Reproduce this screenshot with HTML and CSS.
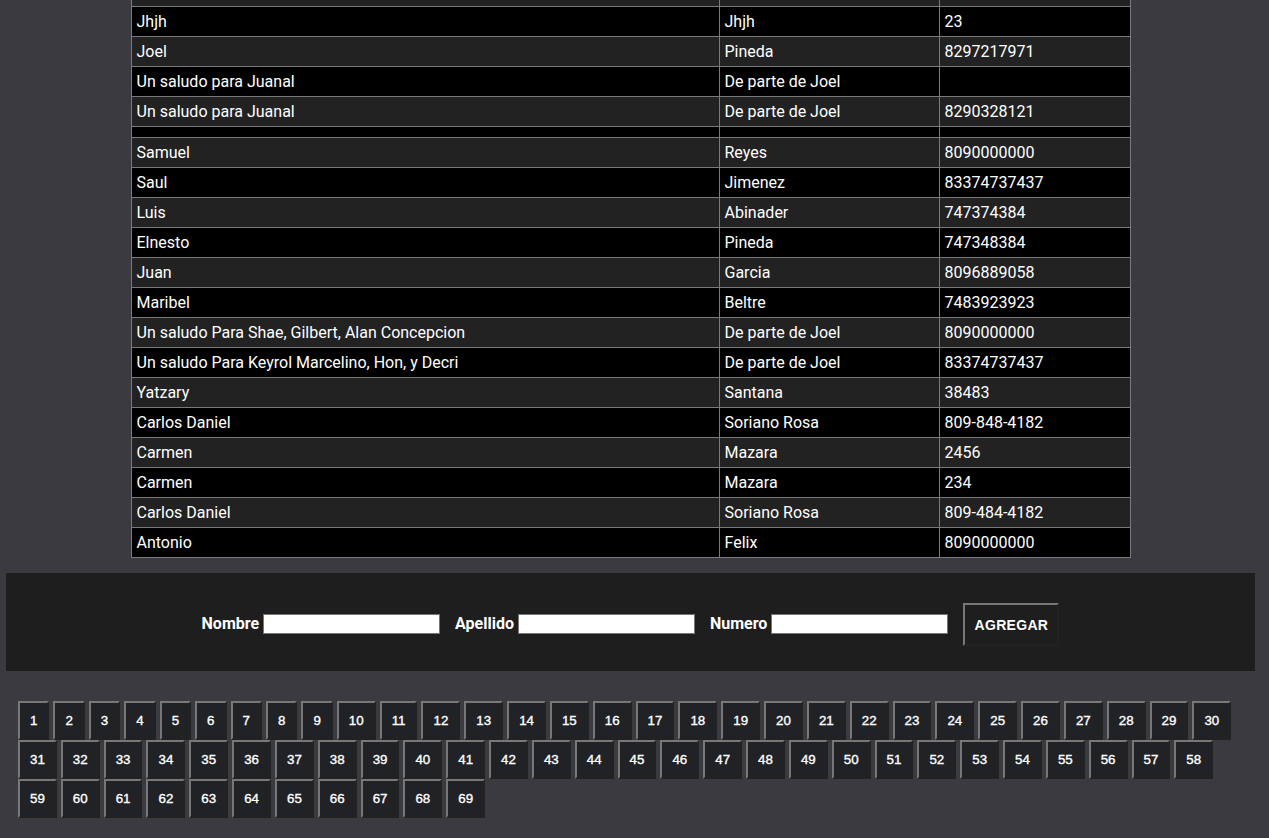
FILE: index.html
```html
<!DOCTYPE html>
<html lang="es">
<head>
<meta charset="utf-8">
<title>Contactos</title>
<link rel="stylesheet" href="styles.css">
</head>
<body>
<div class="page">
  <table class="contacts">
    <tbody>
      <tr class="odd"><td>&nbsp;</td><td>&nbsp;</td><td>&nbsp;</td></tr>
      <tr class="even"><td>Jhjh</td><td>Jhjh</td><td>23</td></tr>
      <tr class="odd"><td>Joel</td><td>Pineda</td><td>8297217971</td></tr>
      <tr class="even"><td>Un saludo para Juanal</td><td>De parte de Joel</td><td></td></tr>
      <tr class="odd"><td>Un saludo para Juanal</td><td>De parte de Joel</td><td>8290328121</td></tr>
      <tr class="even"><td></td><td></td><td></td></tr>
      <tr class="odd"><td>Samuel</td><td>Reyes</td><td>8090000000</td></tr>
      <tr class="even"><td>Saul</td><td>Jimenez</td><td>83374737437</td></tr>
      <tr class="odd"><td>Luis</td><td>Abinader</td><td>747374384</td></tr>
      <tr class="even"><td>Elnesto</td><td>Pineda</td><td>747348384</td></tr>
      <tr class="odd"><td>Juan</td><td>Garcia</td><td>8096889058</td></tr>
      <tr class="even"><td>Maribel</td><td>Beltre</td><td>7483923923</td></tr>
      <tr class="odd"><td>Un saludo Para Shae, Gilbert, Alan Concepcion</td><td>De parte de Joel</td><td>8090000000</td></tr>
      <tr class="even"><td>Un saludo Para Keyrol Marcelino, Hon, y Decri</td><td>De parte de Joel</td><td>83374737437</td></tr>
      <tr class="odd"><td>Yatzary</td><td>Santana</td><td>38483</td></tr>
      <tr class="even"><td>Carlos Daniel</td><td>Soriano Rosa</td><td>809-848-4182</td></tr>
      <tr class="odd"><td>Carmen</td><td>Mazara</td><td>2456</td></tr>
      <tr class="even"><td>Carmen</td><td>Mazara</td><td>234</td></tr>
      <tr class="odd"><td>Carlos Daniel</td><td>Soriano Rosa</td><td>809-484-4182</td></tr>
      <tr class="even"><td>Antonio</td><td>Felix</td><td>8090000000</td></tr>
    </tbody>
  </table>

  <form class="add-form">
    <label class="field-label" for="nombre">Nombre</label>
    <input class="field-input" id="nombre" type="text">
    <label class="field-label" for="apellido">Apellido</label>
    <input class="field-input" id="apellido" type="text">
    <label class="field-label" for="numero">Numero</label>
    <input class="field-input" id="numero" type="text">
    <button class="add-btn" type="button">AGREGAR</button>
  </form>

  <div class="pager">
    <button class="pg">1</button><button class="pg">2</button><button class="pg">3</button><button class="pg">4</button><button class="pg">5</button><button class="pg">6</button><button class="pg">7</button><button class="pg">8</button><button class="pg">9</button><button class="pg">10</button><button class="pg">11</button><button class="pg">12</button><button class="pg">13</button><button class="pg">14</button><button class="pg">15</button><button class="pg">16</button><button class="pg">17</button><button class="pg">18</button><button class="pg">19</button><button class="pg">20</button><button class="pg">21</button><button class="pg">22</button><button class="pg">23</button><button class="pg">24</button><button class="pg">25</button><button class="pg">26</button><button class="pg">27</button><button class="pg">28</button><button class="pg">29</button><button class="pg">30</button><button class="pg">31</button><button class="pg">32</button><button class="pg">33</button><button class="pg">34</button><button class="pg">35</button><button class="pg">36</button><button class="pg">37</button><button class="pg">38</button><button class="pg">39</button><button class="pg">40</button><button class="pg">41</button><button class="pg">42</button><button class="pg">43</button><button class="pg">44</button><button class="pg">45</button><button class="pg">46</button><button class="pg">47</button><button class="pg">48</button><button class="pg">49</button><button class="pg">50</button><button class="pg">51</button><button class="pg">52</button><button class="pg">53</button><button class="pg">54</button><button class="pg">55</button><button class="pg">56</button><button class="pg">57</button><button class="pg">58</button><button class="pg">59</button><button class="pg">60</button><button class="pg">61</button><button class="pg">62</button><button class="pg">63</button><button class="pg">64</button><button class="pg">65</button><button class="pg">66</button><button class="pg">67</button><button class="pg">68</button><button class="pg">69</button>
  </div>
</div>
</body>
</html>
```

FILE: styles.css
```css
html, body {
  margin: 0;
  padding: 0;
  background: #3c3a41;
  overflow: hidden;
}

.page {
  padding: 0 14px 0 6px;
  font-family: Roboto, "Liberation Sans", sans-serif;
  color: #fff;
}

.contacts {
  width: 1000px;
  margin: -24px auto 0;
  border-collapse: collapse;
  font-size: 16px;
  line-height: 19px;
}

.contacts td {
  border: 1px solid #7a7a7a;
  padding: 5px 5px;
  height: 19px;
  vertical-align: middle;
  white-space: nowrap;
}

.contacts td:empty {
  height: 0;
}

.contacts td:nth-child(1) { width: 577px; }
.contacts td:nth-child(2) { width: 209px; }

.contacts tr.odd { background: #222222; }
.contacts tr.even { background: #000000; }

.add-form {
  box-sizing: border-box;
  margin: 15px 0 0;
  height: 98px;
  padding-top: 2px;
  background: #1e1e1e;
  display: flex;
  align-items: center;
  justify-content: center;
}

.field-label {
  font-weight: 700;
  font-size: 16px;
  margin-right: 4px;
  padding-top: 1px;
}

.field-input {
  width: 175px;
  height: 18px;
  padding: 0;
  margin: 2px 15px 0 0;
  border: 1px solid #767676;
  background: #fff;
  box-sizing: content-box;
}

.add-btn {
  width: 96px;
  height: 43px;
  margin-top: 3px;
  background: #1e1e1e;
  color: #fff;
  border: 2px outset #777;
  font-family: "Liberation Sans", Arial, sans-serif;
  font-weight: 700;
  font-size: 14px;
  letter-spacing: 0.3px;
  padding: 0;
}

.pager {
  margin-top: 30px;
  padding: 0 0 21px 12px;
  display: flex;
  flex-wrap: wrap;
  column-gap: 4px;
  row-gap: 0;
}

.pg {
  box-sizing: border-box;
  height: 39px;
  padding: 0 10px;
  margin: 0;
  background: #212226;
  color: #fff;
  border: 2px outset #777;
  font-family: "Liberation Sans", Arial, sans-serif;
  font-weight: 400;
  font-size: 13.333px;
  line-height: 35px;
  -webkit-text-stroke: 0.35px #fff;
}
```
